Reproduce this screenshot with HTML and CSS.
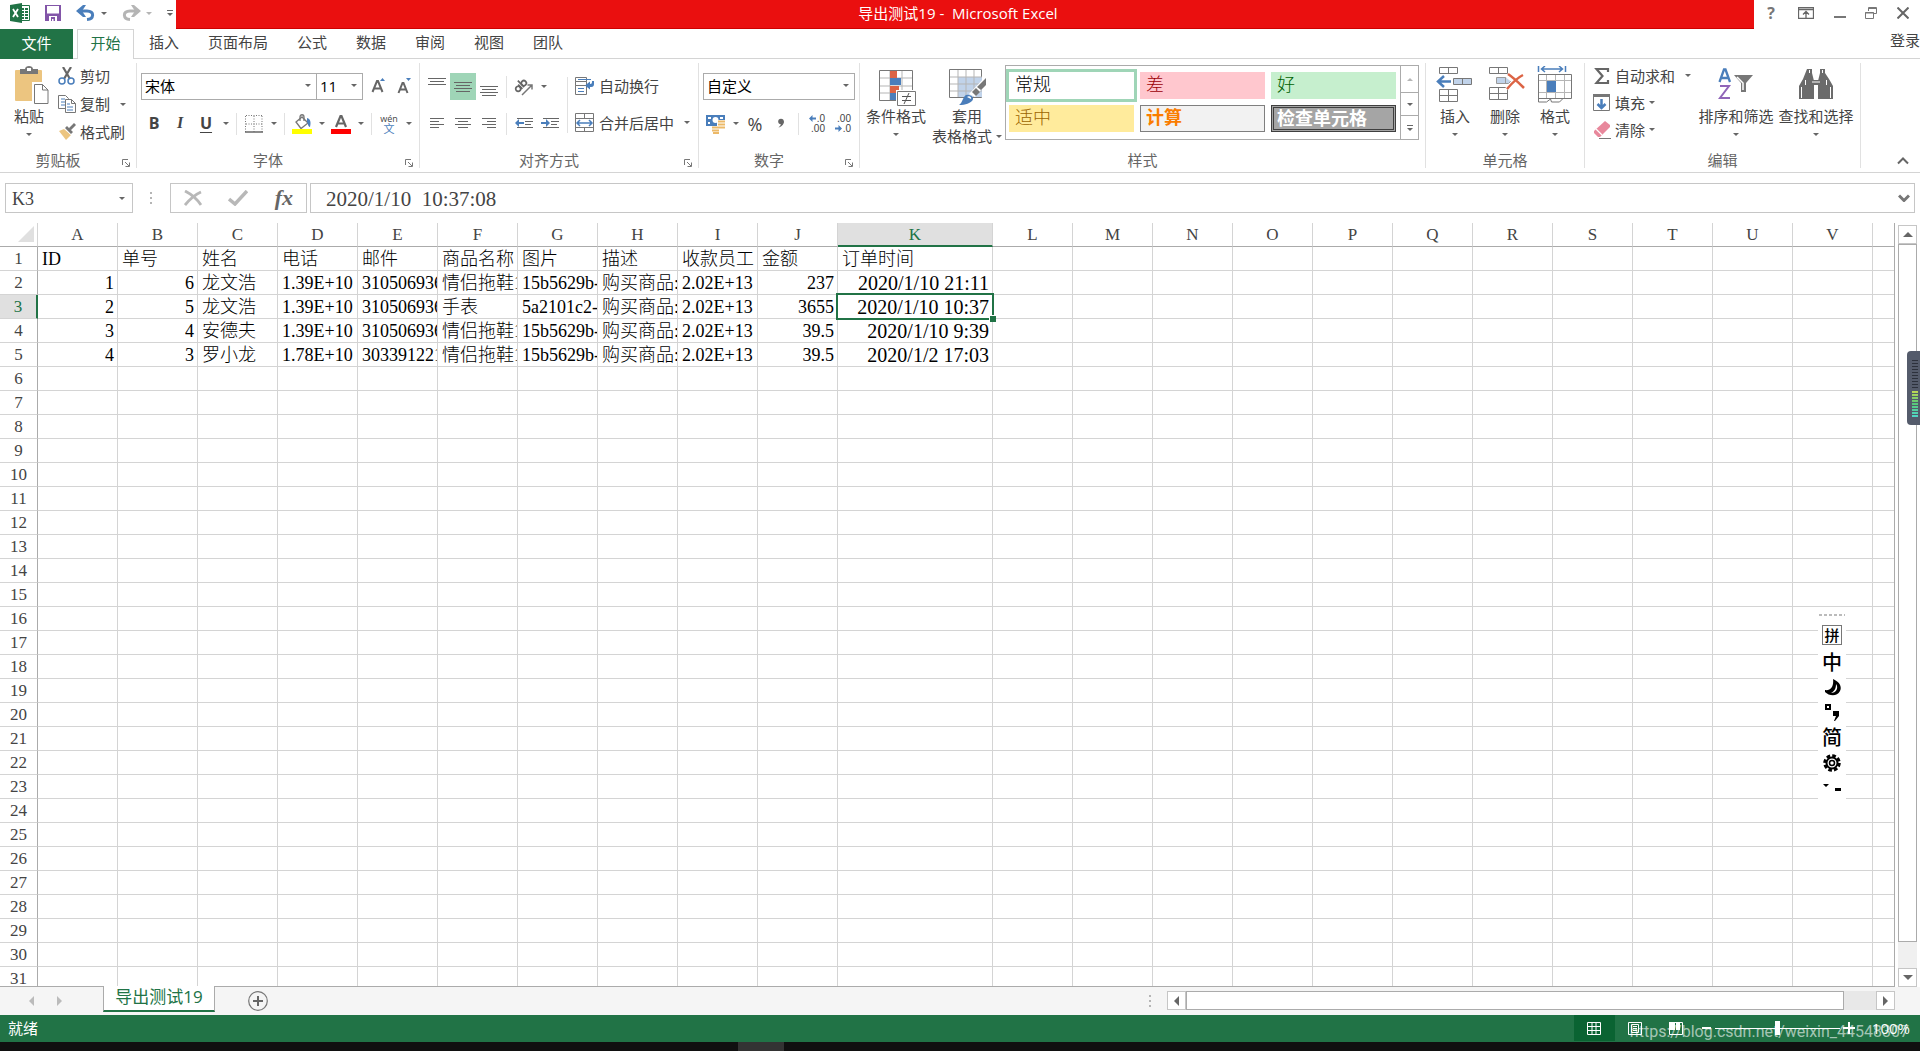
FILE: index.html
```html
<!DOCTYPE html>
<html lang="zh-CN">
<head>
<meta charset="utf-8">
<title>导出测试19 - Microsoft Excel</title>
<link rel="stylesheet" href="styles.css">
</head>
<body>
<header class="titlebar">
  <div class="quick">
    <svg class="logo" width="20" height="20" viewBox="0 0 20 20"><path d="M9 2.500h10.500v15H9z" fill="#fff" stroke="#217346"/><path d="M12 5h2v2h-2zm3 0h3v2h-3zM12 8h2v2h-2zm3 0h3v2h-3zM12 11h2v2h-2zm3 0h3v2h-3zM12 14h2v2h-2zm3 0h3v2h-3z" fill="#217346"/><path d="M0 2l12-2v20L0 18z" fill="#217346"/><path d="M3 6l5 8M8 6l-5 8" stroke="#fff" stroke-width="1.800"/></svg>
    <button class="qb" aria-label="保存"><svg width="16" height="16" viewBox="0 0 16 16"><path d="M0 0h16v16H0z" fill="#8255a8"/><path d="M2 1h12v7.500H2zM4 11h8v5H4z" fill="#fff"/><path d="M6 12h4v4H8.500v-2H7v2H6z" fill="#8255a8"/></svg></button>
    <button class="qb undo" aria-label="撤销"><svg width="20" height="16" viewBox="0 0 20 16"><path d="M2 6h9c8 0 7 8 0 8.500" fill="none" stroke="#4a7ebb" stroke-width="3"/><path d="M0 6L7 0h3L6 6l4 6H7z" fill="#4a7ebb"/></svg><i class="caret"></i></button>
    <button class="qb redo" aria-label="恢复"><svg width="20" height="16" viewBox="0 0 20 16"><path d="M18 6H9c-8 0-7 8 0 8.500" fill="none" stroke="#b5b5b5" stroke-width="3"/><path d="M20 6L13 0h-3l4 6-4 6h3z" fill="#b5b5b5"/></svg><i class="caret pale"></i></button>
    <button class="qb more" aria-label="自定义快速访问工具栏"><i class="dash"></i><i class="caret"></i></button>
  </div>
  <h1>导出测试19 -&nbsp; Microsoft Excel</h1>
  <div class="winbtns">
    <button aria-label="帮助" class="help">?</button>
    <button aria-label="功能区显示选项"><svg width="16" height="12" viewBox="0 0 16 12"><path d="M.5.5h15v11H.5zM1 2.500h14M8 11V5M5 7.500l3-3 3 3" fill="none" stroke="#666" stroke-width="1.300"/></svg></button>
    <button aria-label="最小化"><svg width="12" height="12" viewBox="0 0 12 12"><path d="M0 9h12v2H0z" fill="#777"/></svg></button>
    <button aria-label="还原"><svg width="12" height="12" viewBox="0 0 12 12"><path d="M3.500 4V.5h8v6H9M3 1.500h9M.5 5.500h8v6h-8zM0 6h9" fill="none" stroke="#777"/></svg></button>
    <button aria-label="关闭"><svg width="12" height="12" viewBox="0 0 12 12"><path d="M.5.5l11 11M11.500.5L.5 11.500" stroke="#666" stroke-width="2"/></svg></button>
  </div>
</header>

<nav class="tabs">
  <button class="file">文件</button>
  <button class="tab active">开始</button>
  <button class="tab">插入</button>
  <button class="tab">页面布局</button>
  <button class="tab">公式</button>
  <button class="tab">数据</button>
  <button class="tab">审阅</button>
  <button class="tab">视图</button>
  <button class="tab">团队</button>
  <a class="login" href="#">登录</a>
</nav>

<section class="ribbon">
  <div class="group g-clip">
    <div class="body">
      <button class="big paste"><svg width="40" height="40" viewBox="0 0 40 40"><rect x="6" y="4" width="27" height="31" rx="1" fill="#ecc580"/><path d="M11 3h5c0-4 8-4 8 0h5v5H11z" fill="#777"/><rect x="18" y="2" width="4" height="3" fill="#fff"/><path d="M24.500 17.500h10l5 5v15h-15z" fill="#fff" stroke="#fff" stroke-width="3"/><path d="M25.500 18.500h8l5.500 5.500v13.500H25.500zM33.500 18.500V24H39" fill="#fff" stroke="#777"/></svg><span>粘贴</span><i class="caret"></i></button>
      <div class="stack tall">
        <button class="small"><svg width="18" height="18" viewBox="0 0 18 18"><path d="M5 0l7 12M13 0L6 12" stroke="#666" stroke-width="2.200"/><circle cx="4" cy="14" r="3" fill="none" stroke="#4a7ebb" stroke-width="1.500"/><circle cx="13" cy="14" r="3" fill="none" stroke="#4a7ebb" stroke-width="1.500"/></svg>剪切</button>
        <button class="small wide"><svg width="18" height="18" viewBox="0 0 18 18"><path d="M.5.5h7l3 3v10H.5z" fill="#fff" stroke="#777"/><path d="M3 4h4M3 7h5M3 10h5" stroke="#4a7ebb"/><path d="M7.500 4.500h6l4 4v9h-10zM13.500 4.500v4h4" fill="#fff" stroke="#777"/><path d="M9 9h3M9 12h6M9 15h6" stroke="#4a7ebb"/></svg>复制<i class="caret"></i></button>
        <button class="small"><svg width="18" height="18" viewBox="0 0 18 18"><path d="M1 8l5-2 7 6-5 5z" fill="#ecc580"/><path d="M6 5l3-2 6 6-2 3z" fill="#fff"/><path d="M7 5l2-2 6 6-2 2zM11 5l5-5 2 2-5 5z" fill="#777"/></svg>格式刷</button>
      </div>
    </div>
    <div class="label">剪贴板<button class="launch" aria-label="剪贴板选项"><svg width="8" height="8" viewBox="0 0 8 8"><path d="M.5 6V.5H6M3 3l4 4M7.500 3.500v4h-4" fill="none" stroke="#777"/></svg></button></div>
  </div>

  <div class="group g-font">
    <div class="body col">
      <div class="row">
        <span class="combo face"><select aria-label="字体"><option>宋体</option></select><i class="caret"></i></span>
        <span class="combo size"><select aria-label="字号"><option>11</option></select><i class="caret"></i></span>
        <button class="ib grow" aria-label="增大字号"><svg width="16" height="18" viewBox="0 0 16 18"><path d="M1.500 14L6 3h1l4.500 11M3 10.500h7" fill="none" stroke="#666" stroke-width="2"/><path d="M9 3l2.500-3L14 3z" fill="#4a7ebb"/></svg></button>
        <button class="ib" aria-label="减小字号"><svg width="16" height="18" viewBox="0 0 16 18"><path d="M1.500 15L5.500 5h1l4 10M3 11.500h6" fill="none" stroke="#666" stroke-width="2"/><path d="M9 0h5l-2.500 3z" fill="#4a7ebb"/></svg></button>
      </div>
      <div class="row">
        <button class="ib bold">B</button><button class="ib ital">I</button><button class="ib under">U</button><button class="dd" aria-label="下划线选项"><i class="caret"></i></button>
        <i class="sep"></i>
        <button class="ib" aria-label="边框"><svg width="18" height="18" viewBox="0 0 18 18"><path d="M1 .5h16M.5 1v16M17 1v16M9 1v16M1 9h16" stroke="#777" stroke-dasharray="1 1.500" fill="none"/><path d="M0 17h18" stroke="#666" stroke-width="1.500"/></svg></button><button class="dd" aria-label="边框选项"><i class="caret"></i></button>
        <i class="sep"></i>
        <button class="ib" aria-label="填充颜色"><svg width="20" height="20" viewBox="0 0 20 20"><path d="M4 8l6-5 6 6-7 5.500z" fill="#fff" stroke="#777" stroke-width="1.300"/><path d="M8 7V3c0-3 4-3 4 0v4" fill="none" stroke="#777" stroke-width="1.300"/><path d="M15 4c4 1 4 5 3 9-2 0-2-4-3-5z" fill="#4a7ebb"/><path d="M0 15h20v5H0z" fill="#ff0"/></svg></button><button class="dd" aria-label="填充颜色选项"><i class="caret"></i></button>
        <button class="ib" aria-label="字体颜色"><svg width="20" height="20" viewBox="0 0 20 20"><path d="M5 13L9.500 2h1L15 13M6.500 9.500h7" fill="none" stroke="#666" stroke-width="2.200"/><path d="M0 15h20v5H0z" fill="red"/></svg></button><button class="dd" aria-label="字体颜色选项"><i class="caret"></i></button>
        <i class="sep"></i>
        <button class="ib wen" aria-label="拼音指南"><span>wén</span><b>文</b></button><button class="dd" aria-label="拼音选项"><i class="caret"></i></button>
      </div>
    </div>
    <div class="label">字体<button class="launch" aria-label="字体选项"><svg width="8" height="8" viewBox="0 0 8 8"><path d="M.5 6V.5H6M3 3l4 4M7.500 3.500v4h-4" fill="none" stroke="#777"/></svg></button></div>
  </div>

  <div class="group g-align">
    <div class="body">
      <div class="col">
        <div class="row">
          <button class="ib" aria-label="顶端对齐"><svg width="18" height="26" viewBox="0 0 18 26"><path d="M0 4.500h18M2 7.500h14M0 10.500h18" stroke="#666"/></svg></button>
          <button class="ib on" aria-label="垂直居中"><svg width="18" height="26" viewBox="0 0 18 26"><path d="M0 8.500h18M2 11.500h14M0 14.500h18M2 17.500h14" stroke="#666"/></svg></button>
          <button class="ib" aria-label="底端对齐"><svg width="18" height="26" viewBox="0 0 18 26"><path d="M0 12.500h18M2 15.500h14M0 18.500h18M2 21.500h14" stroke="#666"/></svg></button>
          <i class="sep"></i>
          <button class="ib" aria-label="方向"><svg width="20" height="20" viewBox="0 0 20 20"><g transform="rotate(-45 7 9)" fill="none" stroke="#666" stroke-width="1.700"><circle cx="3" cy="9" r="2.500"/><path d="M6 6v6M8.500 3v9"/><circle cx="11" cy="9" r="2.500"/></g><path d="M8 18L18 8M13.500 8H18v4.500" fill="none" stroke="#777" stroke-width="1.500"/></svg></button><button class="dd" aria-label="方向选项"><i class="caret"></i></button>
        </div>
        <div class="row">
          <button class="ib" aria-label="左对齐"><svg width="14" height="12" viewBox="0 0 14 12"><path d="M0 .5h14M0 3.500h9M0 6.500h14M0 9.500h9" stroke="#666"/></svg></button>
          <button class="ib" aria-label="居中"><svg width="16" height="12" viewBox="0 0 16 12"><path d="M0 .5h16M3 3.500h10M0 6.500h16M3 9.500h10" stroke="#666"/></svg></button>
          <button class="ib" aria-label="右对齐"><svg width="14" height="12" viewBox="0 0 14 12"><path d="M0 .5h14M5 3.500h9M0 6.500h14M5 9.500h9" stroke="#666"/></svg></button>
          <i class="sep"></i>
          <button class="ib" aria-label="减少缩进"><svg width="18" height="12" viewBox="0 0 18 12"><path d="M2 .5h16M10 3.500h8M10 6.500h6M2 9.500h16" stroke="#666"/><path d="M0 5l4-4v3h5v2H4v3z" fill="#4a7ebb"/></svg></button>
          <button class="ib" aria-label="增加缩进"><svg width="18" height="12" viewBox="0 0 18 12"><path d="M2 .5h16M10 3.500h8M10 6.500h6M2 9.500h16" stroke="#666"/><path d="M9 5L5 1v3H0v2h5v3z" fill="#4a7ebb"/></svg></button>
        </div>
      </div>
      <i class="sep long"></i>
      <div class="col">
        <button class="line"><svg width="20" height="20" viewBox="0 0 20 20"><path d="M.5 1.500h11v4H.5zM.5 5.500h11v4H.5zM.5 9.500h11v9H.5z" fill="#fff" stroke="#777"/><path d="M3 3.500h13M3 12.500h6M3 15.500h6" stroke="#4a7ebb"/><path d="M19 5v3c0 3-2 3-4 3v2.500l-5-4 5-4V8c2 0 2-1 2-3z" fill="#4a7ebb"/></svg>自动换行</button>
        <button class="line"><svg width="20" height="20" viewBox="0 0 20 20"><path d="M.5.5h18v18H.5zM0 5.500h18.500M0 14.500h18.500M9.500 0v5M9.500 15v4" fill="none" stroke="#777"/><path d="M2 10h15M5 7l-3 3 3 3M14 7l3 3-3 3" fill="none" stroke="#4a7ebb" stroke-width="1.500"/></svg>合并后居中<i class="caret"></i></button>
      </div>
    </div>
    <div class="label">对齐方式<button class="launch" aria-label="对齐选项"><svg width="8" height="8" viewBox="0 0 8 8"><path d="M.5 6V.5H6M3 3l4 4M7.500 3.500v4h-4" fill="none" stroke="#777"/></svg></button></div>
  </div>

  <div class="group g-num">
    <div class="body col">
      <div class="row"><span class="combo fmt"><select aria-label="数字格式"><option>自定义</option></select><i class="caret"></i></span></div>
      <div class="row">
        <button class="ib" aria-label="会计数字格式"><svg width="20" height="20" viewBox="0 0 20 20"><path d="M0 1h19v11H0z" fill="#4a7ebb"/><path d="M2 3h3v2H2zM14 3h3v2h-3zM2 8h2v2H2z" fill="#fff"/><circle cx="9.500" cy="6" r="3" fill="#fff"/><path d="M11 6h8v8h-5v6H6v-8h5z" fill="#fff"/><path d="M12 6.500h7v2h-7zM12 9.500h7v2h-7zM13 12.500h6v2h-6zM6 12.500h7v2H6zM6 15.500h7v2H6zM7 18h6v2H7z" fill="#ecb968"/></svg></button><button class="dd" aria-label="会计格式选项"><i class="caret"></i></button>
        <button class="ib pct">%</button>
        <button class="ib" aria-label="千位分隔样式"><svg width="8" height="12" viewBox="0 0 8 12"><circle cx="4" cy="3.500" r="2.800" fill="#666"/><path d="M6.800 3C7 7 4 9 1.500 9.500c2-1.500 2.500-3 2.500-5z" fill="#666"/></svg></button>
        <i class="sep"></i>
        <button class="ib dec" aria-label="增加小数位数"><span><svg width="7" height="7" viewBox="0 0 7 7"><path d="M0 3.500l3.500-3.500v2.500H7v2H3.500V7z" fill="#4a7ebb"/></svg>.0</span><span>.00</span></button>
        <button class="ib dec" aria-label="减少小数位数"><span>.00</span><span><svg width="7" height="7" viewBox="0 0 7 7"><path d="M7 3.500L3.500 0v2.500H0v2h3.500V7z" fill="#4a7ebb"/></svg>.0</span></button>
      </div>
    </div>
    <div class="label">数字<button class="launch" aria-label="数字选项"><svg width="8" height="8" viewBox="0 0 8 8"><path d="M.5 6V.5H6M3 3l4 4M7.500 3.500v4h-4" fill="none" stroke="#777"/></svg></button></div>
  </div>

  <div class="group g-style">
    <div class="body">
      <button class="big cond"><svg width="40" height="40" viewBox="0 0 40 40"><path d="M3.500 4.500h33v30h-33z" fill="#fff" stroke="#777"/><path d="M4 12h32M4 20h32M4 27h32M14 5v29M26 5v29" stroke="#b5b5b5"/><path d="M14 5h7v7h-7zM14 20h9v7h-9z" fill="#dc6445"/><path d="M14 12h11v7H14zM14 27h6v7h-6z" fill="#4a7ebb"/><path d="M20 24h20v16H20z" fill="#fff"/><path d="M21.500 25.500h18v14h-18z" fill="#fff" stroke="#777"/><path d="M26 30.500h9M26 34.500h9M33 27l-5 11" stroke="#555"/></svg><span>条件格式</span><i class="caret"></i></button>
      <button class="big tabf"><svg width="40" height="40" viewBox="0 0 40 40"><path d="M2.500 3.500h32v28h-32z" fill="#fff" stroke="#777"/><path d="M11 11h24v20H11z" fill="#c1d3ea"/><path d="M3 11h32M3 18h32M3 25h32M11 4v27M19 4v27M27 4v27" stroke="#b5b5b5"/><path d="M39 10v8L28 31l-6-3z" fill="#fff"/><path d="M39 12v7l-5 5-4-3zM29 22l4 4-4 4-4-4z" fill="#777"/><path d="M12 39c4-2 4-12 10-10 8 2 4 10-10 10z" fill="#4a7ebb"/><path d="M20 31c2-2 5 0 4 2z" fill="#fff"/></svg><span>套用</span><span>表格格式<i class="caret"></i></span></button>
      <div class="gallery">
        <div class="swatches">
          <button class="sw sel"><span>常规</span></button>
          <button class="sw bad"><span>差</span></button>
          <button class="sw good"><span>好</span></button>
          <button class="sw neutral"><span>适中</span></button>
          <button class="sw calc"><span>计算</span></button>
          <button class="sw check"><span>检查单元格</span></button>
        </div>
        <div class="gscroll">
          <button aria-label="上一行"><i class="caret up pale"></i></button>
          <button aria-label="下一行"><i class="caret"></i></button>
          <button aria-label="其他样式"><i class="dash"></i><i class="caret"></i></button>
        </div>
      </div>
    </div>
    <div class="label">样式</div>
  </div>

  <div class="group g-cells">
    <div class="body">
      <button class="big"><svg width="40" height="40" viewBox="0 0 40 40"><path d="M4.500 1.500h18v6h-18zM13.500 1.500v6M4.500 23.500h18v12h-18zM4.500 29.500h18M13.500 23.500v12" fill="#fff" stroke="#777"/><path d="M18.500 12.500h18v6h-18zM27.500 12.500v6" fill="#c1d3ea" stroke="#777"/><path d="M16 15.500H3M9 10l-6 5.500L9 21" fill="none" stroke="#4a7ebb" stroke-width="2.500"/></svg><span>插入</span><i class="caret"></i></button>
      <button class="big"><svg width="40" height="40" viewBox="0 0 40 40"><path d="M4.500 1.500h18v6h-18zM13.500 1.500v6M4.500 21.500h18v12h-18zM4.500 27.500h18M13.500 21.500v12" fill="#fff" stroke="#777"/><path d="M11.500 11.500h12l3 3-3 3h-12zM20.500 11.500v6" fill="#c1d3ea" stroke="#999"/><path d="M22 9l17 14M39 8L22 23" stroke="#fff" stroke-width="5"/><path d="M23 8c6 4 11 9 16 14M38 9c-6 3-11 8-16 14" fill="none" stroke="#dc6445" stroke-width="2.500"/></svg><span>删除</span><i class="caret"></i></button>
      <button class="big"><svg width="40" height="40" viewBox="0 0 40 40"><path d="M3.500 0v6M30.500 0v6M7 3h20M10 0L6.500 3 10 6M24 0l3.500 3L24 6" fill="none" stroke="#4a7ebb" stroke-width="1.500"/><path d="M3.500 8.500h33v24h-33z" fill="#fff" stroke="#777"/><path d="M4 14.500h32M4 26.500h32M11.500 9v23M20.500 9v23M29.500 9v23" stroke="#b5b5b5"/><path d="M12 15h9v11h-9z" fill="#4a7ebb"/><path d="M3.500 32v4h8l4-3 1 3h8l3-3" fill="none" stroke="#777"/></svg><span>格式</span><i class="caret"></i></button>
    </div>
    <div class="label">单元格</div>
  </div>

  <div class="group g-edit">
    <div class="body">
      <div class="stack">
        <button class="small wide"><svg width="18" height="18" viewBox="0 0 18 18"><path d="M15 5V2H3.500L9.500 9l-6 7H15v-3" fill="none" stroke="#666" stroke-width="2.200"/></svg>自动求和<i class="caret"></i></button>
        <button class="small"><svg width="18" height="18" viewBox="0 0 18 18"><path d="M.5.5h16v16H.5z" fill="#fff" stroke="#777"/><path d="M0 0h17v3H0z" fill="#777"/><path d="M8.500 5v9M4.500 10l4 4 4-4" fill="none" stroke="#4a7ebb" stroke-width="2.500"/></svg>填充<i class="caret"></i></button>
        <button class="small"><svg width="18" height="18" viewBox="0 0 18 18"><path d="M12 0l5 4v2L7 16H5L1 12v-2z" fill="#e8889c"/><path d="M3 8l6 6" stroke="#fff" stroke-width="1.200"/><path d="M6 17.500h12" stroke="#777"/></svg>清除<i class="caret"></i></button>
      </div>
      <button class="big eighty"><svg width="40" height="40" viewBox="0 0 40 40"><path d="M3.500 16L8 3.500h1.500L14 16M5 12h7.500" fill="none" stroke="#4a7ebb" stroke-width="2.300"/><path d="M4 20h9L4 32h10" fill="none" stroke="#9065b8" stroke-width="2"/><path d="M18 9h19l-7 8v9h-5v-9z" fill="#777"/><path d="M21 11l6 6v7" fill="none" stroke="#fff" stroke-width="1.500"/></svg><span>排序和筛选</span><i class="caret"></i></button>
      <button class="big eighty"><svg width="40" height="40" viewBox="0 0 40 40"><path d="M11 3h5v4l2 8v18H3V20l4-7zM24 3h5v4l4 6 4 7v13H22V15l2-8zM16 14h8v5h-8z" fill="#6b6b6b"/><path d="M5.500 21v11M9.500 14v5M13.500 4v3M26.500 4v3M30.500 14v5M34.500 21v11M16 16h8" stroke="#fff"/></svg><span>查找和选择</span><i class="caret"></i></button>
    </div>
    <div class="label">编辑</div>
  </div>
  <button class="collapse" aria-label="折叠功能区"><svg width="12" height="8" viewBox="0 0 12 8"><path d="M1 6.500l5-5 5 5" fill="none" stroke="#666" stroke-width="2"/></svg></button>
</section>

<section class="formula">
  <span class="namebox"><input aria-label="名称框" value="K3"><i class="caret"></i></span>
  <i class="dots"></i>
  <div class="fxbox">
    <button aria-label="取消"><svg width="18" height="16" viewBox="0 0 18 16"><path d="M1 1c6 3 12 8 16 14M17 2C10 5 6 9 1 15" fill="none" stroke="#b8b8b8" stroke-width="2.800"/></svg></button>
    <button aria-label="输入"><svg width="20" height="16" viewBox="0 0 20 16"><path d="M1 9l6 5L19 1" fill="none" stroke="#b8b8b8" stroke-width="3.500"/></svg></button>
    <button class="fx" aria-label="插入函数">fx</button>
  </div>
  <div class="finput"><input aria-label="编辑栏" value="2020/1/10  10:37:08"><button aria-label="展开编辑栏"><svg width="12" height="8" viewBox="0 0 12 8"><path d="M1 1.500l5 5 5-5" fill="none" stroke="#777" stroke-width="3"/></svg></button></div>
</section>

<main class="work">
  <div class="sheet"><table id="grid"></table></div>
  <div class="vscroll">
    <button aria-label="向上滚动"><i class="tri up"></i></button>
    <div class="vtrack"><div class="vthumb"></div></div>
    <button aria-label="向下滚动"><i class="tri down"></i></button>
  </div>
</main>

<div class="sheetbar">
  <button class="nav" aria-label="上一个工作表"><i class="tri left pale"></i></button>
  <button class="nav" aria-label="下一个工作表"><i class="tri right pale"></i></button>
  <button class="stab">导出测试19</button>
  <button class="add" aria-label="新工作表"><svg width="20" height="20" viewBox="0 0 20 20"><circle cx="10" cy="10" r="9.300" fill="none" stroke="#777" stroke-width="1.200"/><path d="M10 5v10M5 10h10" stroke="#666" stroke-width="2"/></svg></button>
  <i class="dots"></i>
  <div class="hscroll">
    <button aria-label="向左滚动"><i class="tri left"></i></button>
    <div class="htrack"><div class="hthumb"></div></div>
    <button aria-label="向右滚动"><i class="tri right"></i></button>
  </div>
</div>

<footer class="status">
  <span class="ready">就绪</span>
  <button class="view on" aria-label="普通"><svg width="14" height="13" viewBox="0 0 14 13"><path d="M.5.5h13v12H.5zM5 0v13M9 0v13M0 4.500h14M0 8.500h14" fill="none" stroke="#fff"/></svg></button>
  <button class="view" aria-label="页面布局"><svg width="14" height="13" viewBox="0 0 14 13"><path d="M.5.5h13v12H.5zM3.500 2.500h7v8h-7zM5 4.500h4M5 6.500h4M5 8.500h4" fill="none" stroke="#fff"/></svg></button>
  <button class="view" aria-label="分页预览"><svg width="14" height="13" viewBox="0 0 14 13"><path d="M.5.5h13v12H.5z" fill="none" stroke="#fff"/><path d="M0 0h6v8H0zM7 0h4v8H7z" fill="#fff"/></svg></button>
  <button class="zb" aria-label="缩小"><svg width="10" height="10" viewBox="0 0 10 10"><path d="M0 4h9v2H0z" fill="#fff"/></svg></button>
  <input class="zoom" type="range" min="0" max="100" value="50" aria-label="显示比例">
  <button class="zb plus" aria-label="放大"><svg width="12" height="12" viewBox="0 0 12 12"><path d="M0 5h12v2H0zM5 0h2v12H5z" fill="#fff"/></svg></button>
  <button class="pctv">100%</button>
  <span class="mark">https://blog.csdn.net/weixin_44548307</span>
</footer>
<div class="desk"><i></i></div>

<aside class="ime" aria-label="输入法">
  <i class="grip"></i>
  <button class="pin">拼</button>
  <button>中</button>
  <button aria-label="半角"><svg width="17" height="17" viewBox="0 0 17 17"><path d="M9 0c7 3 9 8 7 12-3 6-11 5-15 1v-2c6 1 9-4 8-11z" fill="#000"/><path d="M12 5c3 4 0 9-5 9 4-2 5-5 5-9z" fill="#fff"/></svg></button>
  <button aria-label="中文标点"><svg width="17" height="17" viewBox="0 0 17 17"><path d="M2 1h4v4H2z" fill="none" stroke="#000" stroke-width="2"/><path d="M9 7h6v5l-4 5h-1l2-5H9z" fill="#000"/></svg></button>
  <button>简</button>
  <button aria-label="设置"><svg width="18" height="18" viewBox="0 0 18 18"><circle cx="9" cy="9" r="7" fill="none" stroke="#000" stroke-width="3.500" stroke-dasharray="3.500 2"/><circle cx="9" cy="9" r="5.500" fill="none" stroke="#000" stroke-width="2"/><circle cx="9" cy="9" r="2.500" fill="none" stroke="#000" stroke-width="1.500"/></svg></button>
  <button aria-label="选项"><svg width="18" height="8" viewBox="0 0 18 8"><path d="M0 0h6L3 3zM12 4h6v3h-6z" fill="#000"/></svg></button>
</aside>
<div class="meter"><i></i><b></b></div>
<script src="app.js"></script>
</body>
</html>
```
FILE: styles.css
```css
* { box-sizing: border-box; }
body {
  margin: 0;
  height: 100vh;
  display: flex;
  flex-direction: column;
  overflow: hidden;
  background: #fff;
  color: #444;
  font: 15px/20px "Open Sans", "Noto Sans CJK SC", sans-serif;
}
button, input, select {
  font: inherit;
  color: inherit;
  background: none;
  border: 0;
  padding: 0;
  margin: 0;
  border-radius: 0;
  outline: 0;
}
select { appearance: none; }
svg { display: block; flex: none; }
i { font-style: normal; flex: none; }

.caret {
  display: inline-block;
  border: 3px solid transparent;
  border-top-color: #666;
  border-bottom: 0;
}
.caret.up { border-top: 0; border-bottom: 3px solid #666; }
.caret.pale { border-top-color: #b5b5b5; border-bottom-color: #b5b5b5; }
.dash { display: block; width: 6px; height: 1px; background: #666; margin-bottom: 2px; }
.tri { width: 0; height: 0; border: 5px solid transparent; }
.tri.up { border-top: 0; border-bottom-color: #666; }
.tri.down { border-bottom: 0; border-top-color: #666; }
.tri.left { border-left: 0; border-right-color: #666; }
.tri.right { border-right: 0; border-left-color: #666; }
.tri.left.pale { border-right-color: #bbb; }
.tri.right.pale { border-left-color: #bbb; }

/* title bar */
.titlebar { display: flex; height: 29px; flex: none; }
.quick { width: 176px; display: flex; align-items: center; padding: 0 0 3px 10px; }
.qb { display: flex; align-items: center; gap: 5px; margin-left: 15px; }
.redo { margin-left: 14px; }
.qb.more { flex-direction: column; gap: 0; }
.titlebar h1 {
  flex: 1;
  margin: 0;
  padding: 0 14px 6px 0;
  background: #ea0f0f;
  border-bottom: 1px solid #c00;
  color: #fff;
  font-size: 15px;
  font-weight: 400;
  line-height: 26px;
  text-align: center;
}
.winbtns { width: 166px; display: flex; align-items: center; justify-content: space-between; padding: 0 11px 3px 10px; }
.winbtns .help { font-weight: 700; font-size: 16px; width: 14px; color: #777; }

/* ribbon tabs */
.tabs { display: flex; height: 30px; flex: none; border-bottom: 1px solid #d4d4d4; }
.tabs button { height: 30px; padding-bottom: 4px; }
.tabs .file { width: 73px; padding-bottom: 2px; margin-right: 4px; background: #217346; color: #fff; }
.tab { padding: 0 14px 0 15px; }
.tabs .active { width: 57px; padding: 0 0 4px; color: #217346; background: #fff; border: 1px solid #d4d4d4; border-bottom: 0; }
.login { margin-left: auto; color: inherit; text-decoration: none; line-height: 22px; }

/* ribbon */
.ribbon { display: flex; height: 114px; flex: none; padding: 4px 0; border-bottom: 1px solid #d4d4d4; }
.group { display: flex; flex-direction: column; border-right: 1px solid #e1e1e1; flex: none; }
.body { display: flex; height: 89px; padding-left: 4px; }
.label { position: relative; text-align: center; line-height: 16px; color: #666; padding-right: 20px; }
.launch { position: absolute; right: 6px; top: 7px; }
.g-clip { width: 137px; }
.g-font { width: 283px; }
.g-align { width: 279px; }
.g-num { width: 161px; }
.g-style { width: 566px; }
.g-cells { width: 159px; }
.g-edit { width: 276px; }
.g-style .label, .g-cells .label, .g-edit .label { padding-right: 0; }
.col { display: flex; flex-direction: column; gap: 10px; padding-top: 10px; }
.row { display: flex; height: 27px; align-items: center; }
.big { width: 50px; padding-top: 3px; display: flex; flex-direction: column; align-items: center; white-space: nowrap; }
.big > .caret { margin-top: 7px; }
.big span .caret { margin-left: 4px; vertical-align: 4px; }
.big.cond { width: 66px; margin-left: -1px; }
.big.tabf { width: 76px; }
.big.eighty { width: 80px; }
.stack { display: flex; flex-direction: column; }
.small { height: 27px; padding: 0 0 2px 4px; display: flex; align-items: center; gap: 4px; white-space: nowrap; }
.tall .small { height: 28px; }
.small.wide .caret { margin-left: 6px; }
.g-edit .stack { width: 107px; }
.ib { width: 26px; height: 27px; display: flex; align-items: center; justify-content: center; flex: none; }
.ib.on { background: #9fd5b7; }
.dd { width: 13px; height: 27px; display: flex; align-items: center; justify-content: center; flex: none; }
.sep { width: 1px; height: 22px; margin: 0 4px; background: #e1e1e1; }
.sep.long { height: 56px; margin-top: 14px; }
.bold, .ital, .under { font-weight: 700; font-size: 16px; padding-bottom: 2px; }
.ital { font-style: italic; font-family: "Liberation Serif", serif; }
.under { text-decoration: underline; text-underline-offset: 3px; }
.wen { flex-direction: column; font-size: 9px; line-height: 9px; }
.wen b { font-weight: 400; font-size: 11px; line-height: 11px; color: #4a7ebb; }
.pct { font-size: 18px; }
.dec { flex-direction: column; align-items: flex-end; padding-right: 4px; font: 10px/10px "Liberation Sans", sans-serif; }
.dec span { display: flex; align-items: center; gap: 1px; }
.line { height: 27px; padding: 0 0 2px 3px; display: flex; align-items: center; gap: 4px; white-space: nowrap; }
.line .caret { margin-left: 6px; }
.combo { display: flex; align-items: center; height: 27px; border: 1px solid #ababab; color: #000; }
.combo select { flex: 1; min-width: 0; height: 25px; padding: 0 0 2px 3px; }
.combo .caret { margin: 0 5px 2px 0; }
.combo.face { width: 176px; }
.combo.size { width: 47px; margin-left: -1px; }
.combo.fmt { width: 152px; }
.ib.grow { margin-left: 3px; }

.gallery { display: flex; width: 414px; height: 75px; margin-top: 2px; border: 1px solid #ababab; }
.swatches { display: grid; grid-template-columns: repeat(3, 131px); grid-template-rows: 33px 33px; padding-top: 3px; width: 394px; }
.sw { border: 3px solid transparent; text-align: left; font-size: 18px; font-weight: 300; }
.sw span { display: block; height: 27px; padding-left: 6px; line-height: 24px; }
.sw.sel { border-color: #9fd5b7; color: #000; }
.bad span { background: #ffc7ce; color: #9c0006; }
.good span { background: #c6efce; color: #006100; }
.neutral span { background: #ffeb9c; color: #9c6500; }
.calc span { background: #f2f2f2; color: #fa7d00; border: 1px solid #7f7f7f; font-weight: 700; line-height: 22px; padding-left: 5px; }
.check span { background: #a5a5a5; color: #fff; border: 3px double #3f3f3f; font-weight: 700; line-height: 20px; padding-left: 3px; }
.gscroll { width: 18px; border-left: 1px solid #ababab; display: grid; grid-template-rows: 26px 23px 24px; }
.gscroll button { display: flex; flex-direction: column; align-items: center; justify-content: center; }
.gscroll button + button { border-top: 1px solid #ababab; }
.collapse { margin: auto 11px 3px auto; }

/* formula bar */
.formula { display: flex; height: 50px; flex: none; padding: 10px 5px; font: 18px "Liberation Serif", "Noto Sans CJK SC", serif; }
.namebox { width: 128px; display: flex; align-items: center; border: 1px solid #c6c6c6; }
.namebox input { flex: 1; min-width: 0; padding: 2px 0 0 6px; }
.namebox .caret { margin-right: 7px; }
.dots { width: 2px; height: 12px; margin: 9px 18px 0 17px; background: repeating-linear-gradient(#b5b5b5 0 2px, transparent 2px 5px); }
.fxbox { width: 137px; display: flex; align-items: center; justify-content: space-between; padding: 0 13px; border: 1px solid #c6c6c6; margin-right: 3px; }
.fx { font: italic 700 22px/22px "Liberation Serif", serif; color: #666; }
.finput { flex: 1; display: flex; align-items: center; border: 1px solid #c6c6c6; padding-right: 4px; }
.finput input { flex: 1; padding: 2px 0 0 15px; font-size: 21px; }

/* worksheet */
.work { flex: 1; min-height: 0; display: flex; }
.sheet { flex: 1; min-width: 0; overflow: hidden; border-right: 1px solid #ababab; border-bottom: 1px solid #ababab; }
#grid { width: 100%; table-layout: fixed; border-collapse: separate; border-spacing: 0; font: 300 18px/23px "Liberation Serif", "Noto Sans CJK SC", serif; color: #000; }
.c-head { width: 38px; }
.c-std { width: 80px; }
.c-date { width: 155px; }
#grid th { height: 24px; padding: 1px 0 0; font-size: 17px; line-height: 22px; font-weight: 400; color: #444; border-bottom: 1px solid #ababab; border-right: 1px solid #d4d4d4; }
#grid tbody th { border-bottom-color: #d4d4d4; border-right-color: #ababab; }
#grid td { height: 24px; padding: 1px 3px 0 4px; border-right: 1px solid #d4d4d4; border-bottom: 1px solid #d4d4d4; white-space: nowrap; overflow: hidden; line-height: 22px; }
#grid tr > :last-child { border-right: 0; }
#grid td.num { text-align: right; }
#grid td.date { text-align: right; font-size: 20px; }
#grid .hot { background: #e0e0e0; color: #217346; }
#grid thead .hot { border-bottom: 2px solid #217346; line-height: 21px; }
#grid tbody .hot { border-right: 2px solid #217346; }
#grid td.cursor { position: relative; overflow: visible; }
.cursor::before { content: ""; position: absolute; inset: -2px -2px -2px -2px; border: 2px solid #217346; }
.cursor::after { content: ""; position: absolute; right: -4px; bottom: -4px; width: 6px; height: 6px; background: #217346; border: 1px solid #fff; border-width: 1px 0 0 1px; }
#grid .corner { width: 0; height: 0; margin: -2px 0 0 18px; border: 8px solid #e0e0e0; border-top-color: transparent; border-left-color: transparent; }
.vscroll { width: 25px; display: flex; flex-direction: column; padding: 2px 3px 0; }
.vscroll button, .hscroll button { width: 19px; height: 19px; flex: none; display: flex; align-items: center; justify-content: center; border: 1px solid #c6c6c6; background: #fff; }
.vtrack { flex: 1; background: #f0f0f0; padding-bottom: 26px; width: 19px; }
.vthumb { height: 100%; background: #fff; border: 1px solid #ababab; }

/* sheet tabs */
.sheetbar { display: flex; height: 28px; flex: none; background: #f5f5f5; }
.nav { width: 28px; display: flex; align-items: center; justify-content: center; }
.nav:first-child { margin-left: 17px; }
.stab { width: 112px; height: 26px; margin: -1px 0 0 30px; padding-bottom: 2px; position: relative; background: #fff; color: #217346; font-size: 17px; line-height: 22px; border: 1px solid #ababab; border-top: 0; border-bottom: 2px solid #217346; }
.add { margin-left: 33px; margin-right: auto; }
.hscroll { width: 728px; display: flex; padding-top: 4px; margin-right: 25px; }
.htrack { flex: 1; height: 19px; background: #e8e8e8; padding-right: 32px; }
.hthumb { height: 100%; background: #fff; border: 1px solid #ababab; }
.sheetbar .dots { margin: 8px 16px 0 0; }

/* status bar */
.status { position: relative; display: flex; align-items: center; height: 27px; flex: none; background: #217346; color: #fff; padding-bottom: 1px; }
.ready { margin: 0 auto 0 8px; }
.view { width: 41px; height: 26px; display: flex; align-items: center; justify-content: center; }
.view.on { background: #0a6332; }
.zb { margin-left: 5px; }
.zb.plus { margin-left: 3px; }
.zoom { appearance: none; width: 125px; height: 14px; margin-left: 3px; background: linear-gradient(#fff, #fff) center / 100% 1px no-repeat; }
.zoom::-webkit-slider-thumb { appearance: none; width: 5px; height: 14px; background: #fff; }
.pctv { margin: 0 10px 0 17px; }
.mark { position: absolute; right: 11px; top: 6px; font: 16px/22px Roboto, "Open Sans", sans-serif; color: rgba(255, 255, 255, .6); }
.desk { height: 9px; flex: none; background: #101010; display: flex; justify-content: center; }
.desk i { width: 46px; margin-right: 398px; background: #333; }

/* floating tools over the sheet */
.ime { position: fixed; right: 74px; bottom: 251px; width: 28px; height: 186px; display: flex; flex-direction: column; align-items: center; background: #fff; color: #000; font-size: 20px; font-weight: 500; }
.ime button { height: 25px; flex: none; display: flex; align-items: center; justify-content: center; }
.ime .pin { width: 20px; height: 20px; margin: 9px 0 5px; border: 1px solid #777; font-size: 15px; }
.grip { width: 26px; height: 2px; background: repeating-linear-gradient(90deg, #bbb 0 3px, transparent 3px 5px); }
.meter { position: fixed; right: 0; top: 351px; width: 13px; height: 74px; padding: 9px 2px 0 5px; background: #545b6b; border-radius: 4px 0 0 4px; }
.meter i, .meter b { display: block; height: 30px; background: repeating-linear-gradient(#2c313c 0 1px, transparent 1px 3px); }
.meter b { height: 27px; background: repeating-linear-gradient(#545b6b 0 1px, transparent 1px 3px), linear-gradient(#c8d850, #58c878, #50d8c8); }
```
FILE: app.js
```js
const columns = "ABCDEFGHIJKLMNOPQRSTUV".split("");
const rowCount = 31;
const active = { col: "K", row: 3 };
const data = [
  ["ID", "单号", "姓名", "电话", "邮件", "商品名称", "图片", "描述", "收款员工", "金额", "订单时间"],
  [1, 6, "龙文浩", "1.39E+10", "310506936", "情侣拖鞋1", "15b5629b-", "购买商品:", "2.02E+13", 237, "2020/1/10 21:11"],
  [2, 5, "龙文浩", "1.39E+10", "310506936", "手表", "5a2101c2-", "购买商品:", "2.02E+13", 3655, "2020/1/10 10:37"],
  [3, 4, "安德夫", "1.39E+10", "310506936", "情侣拖鞋1", "15b5629b-", "购买商品:", "2.02E+13", 39.5, "2020/1/10 9:39"],
  [4, 3, "罗小龙", "1.78E+10", "303391221", "情侣拖鞋1", "15b5629b-", "购买商品:", "2.02E+13", 39.5, "2020/1/2 17:03"]
];

let html = '<colgroup><col class="c-head">';
columns.forEach(c => { html += `<col class="${c === "K" ? "c-date" : "c-std"}">`; });
html += '<col></colgroup><thead><tr><th><div class="corner"></div></th>';
columns.forEach(c => { html += `<th scope="col"${c === active.col ? ' class="hot"' : ""}>${c}</th>`; });
html += "<th></th></tr></thead><tbody>";
for (let r = 1; r <= rowCount; r++) {
  html += `<tr><th scope="row"${r === active.row ? ' class="hot"' : ""}>${r}</th>`;
  for (let c = 0; c <= columns.length; c++) {
    const value = (data[r - 1] || [])[c] ?? "";
    const classes = [];
    if (typeof value === "number") classes.push("num");
    if (columns[c] === "K" && r > 1 && value) classes.push("date");
    if (columns[c] === active.col && r === active.row) classes.push("cursor");
    html += `<td${classes.length ? ` class="${classes.join(" ")}"` : ""}>${value}</td>`;
  }
  html += "</tr>";
}
document.getElementById("grid").innerHTML = html + "</tbody>";
```
